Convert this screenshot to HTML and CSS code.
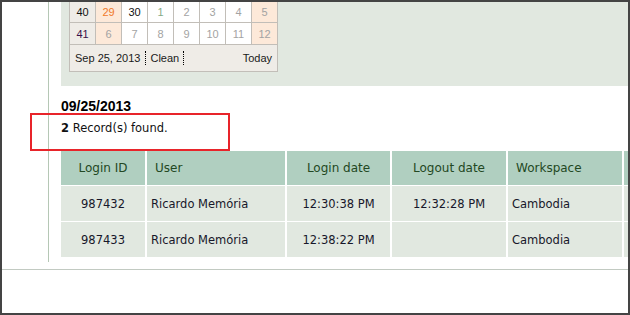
FILE: index.html
```html
<!DOCTYPE html>
<html lang="en">
<head>
    <meta charset="UTF-8">
    <meta name="viewport" content="width=device-width, initial-scale=1.0">
    <title>Login Report</title>
    <link rel="stylesheet" href="styles.css">
</head>
<body>
<div class="frame">
    <div class="main">
        <div class="filter-panel">
            <table class="cal">
                <tr>
                    <td class="wk">40</td>
                    <td class="we prev">29</td>
                    <td class="cur">30</td>
                    <td class="nx first">1</td>
                    <td class="nx">2</td>
                    <td class="nx">3</td>
                    <td class="nx">4</td>
                    <td class="we nx">5</td>
                </tr>
                <tr>
                    <td class="wk wk-now">41</td>
                    <td class="we nx">6</td>
                    <td class="nx">7</td>
                    <td class="nx">8</td>
                    <td class="nx">9</td>
                    <td class="nx">10</td>
                    <td class="nx">11</td>
                    <td class="we nx">12</td>
                </tr>
                <tr>
                    <td colspan="8" class="cal-foot">
                        <div class="cal-bar">
                            <span class="cal-date">Sep 25, 2013</span>
                            <span class="cal-clean">Clean</span>
                            <span class="cal-today">Today</span>
                        </div>
                    </td>
                </tr>
            </table>
        </div>

        <h2 class="report-date">09/25/2013</h2>
        <p class="record-count"><strong>2</strong> Record(s) found.</p>

        <table class="results">
            <thead>
                <tr>
                    <th class="c-id">Login ID</th>
                    <th class="c-user left">User</th>
                    <th class="c-in">Login date</th>
                    <th class="c-out">Logout date</th>
                    <th class="c-ws left">Workspace</th>
                    <th class="c-term left"></th>
                </tr>
            </thead>
            <tbody>
                <tr>
                    <td>987432</td>
                    <td class="left">Ricardo Memória</td>
                    <td>12:30:38 PM</td>
                    <td>12:32:28 PM</td>
                    <td class="left">Cambodia</td>
                    <td class="left"></td>
                </tr>
                <tr>
                    <td>987433</td>
                    <td class="left">Ricardo Memória</td>
                    <td>12:38:22 PM</td>
                    <td></td>
                    <td class="left">Cambodia</td>
                    <td class="left"></td>
                </tr>
            </tbody>
        </table>
    </div>
    <div class="page-foot"></div>

    <!-- annotation drawn over the page -->
    <div class="highlight-box"></div>
</div>
</body>
</html>
```

FILE: styles.css
```css
html, body {
    margin: 0;
    padding: 0;
    background: #ffffff;
}
.frame {
    position: relative;
    width: 630px;
    height: 315px;
    box-sizing: border-box;
    border: 2px solid #444444;
    overflow: hidden;
    background: #ffffff;
}
.main {
    margin-left: 46px;
    border-left: 1px solid #b5c7b5;
    padding: 0 0 4px 12px;
}
.filter-panel {
    background: #e1e8e0;
    padding: 0 0 14px 8px;
}

/* calendar popup */
.cal {
    margin-top: -2px;
    border-collapse: collapse;
    table-layout: fixed;
    width: 209px;
    font-family: "Liberation Sans", Arial, sans-serif;
    font-size: 11px;
    background: #ffffff;
}
.cal td {
    width: 25px;
    height: 21px;
    padding: 0;
    border: 1px solid #c2beb8;
    text-align: center;
    color: #111111;
}
.cal td.wk {
    background: #efece7;
}
.cal td.wk-now {
    color: #3a0f4a;
}
.cal td.we {
    background: #fde9d9;
}
.cal td.prev {
    color: #f07a2a;
}
.cal td.nx {
    color: #a3a3a3;
}
.cal td.first {
    color: #86aa86;
}
.cal td.cal-foot {
    height: 26px;
    background: #efece7;
    text-align: left;
}
.cal-bar {
    display: flex;
    align-items: center;
    padding: 0 5px;
    color: #1a1a1a;
    line-height: 14px;
}
.cal-date {
    padding-right: 5px;
    border-right: 1px dotted #000000;
}
.cal-clean {
    padding: 0 4px;
    border-right: 1px dotted #000000;
}
.cal-today {
    margin-left: auto;
}

/* report */
.report-date {
    margin: 12px 0 0;
    font-family: "Liberation Sans", Arial, sans-serif;
    font-size: 14px;
    line-height: 16px;
    font-weight: bold;
    color: #000000;
}
.record-count {
    margin: 6px 0 0;
    font-family: "DejaVu Sans", Verdana, sans-serif;
    font-size: 11.5px;
    line-height: 16px;
    color: #111111;
}
.results {
    margin: 14px 0 0 -2px;
    border-collapse: separate;
    border-spacing: 2px 1px;
    table-layout: fixed;
    width: 667px;
    font-family: "DejaVu Sans", Verdana, sans-serif;
}
.results th {
    height: 34px;
    padding: 0 8px;
    background: #b0cfc0;
    color: #234823;
    font-size: 12px;
    font-weight: normal;
    text-align: center;
}
.results td {
    height: 35px;
    padding: 0 4px;
    background: #e1e8e0;
    color: #17172a;
    font-size: 11.5px;
    text-align: center;
}
.results .left {
    text-align: left;
}
/* widths are content widths, header padding is 16px on top */
.results .c-id { width: 68px; }
.results .c-user { width: 122px; }
.results .c-in { width: 87px; }
.results .c-out { width: 98px; }
.results .c-ws { width: 98px; }
.results .c-term { width: 84px; }

.page-foot {
    margin-top: 7px;
    border-top: 1px solid #c2cac2;
}

.highlight-box {
    position: absolute;
    left: 28px;
    top: 111px;
    width: 200px;
    height: 38px;
    box-sizing: border-box;
    border: 2px solid #e8242a;
}
```
